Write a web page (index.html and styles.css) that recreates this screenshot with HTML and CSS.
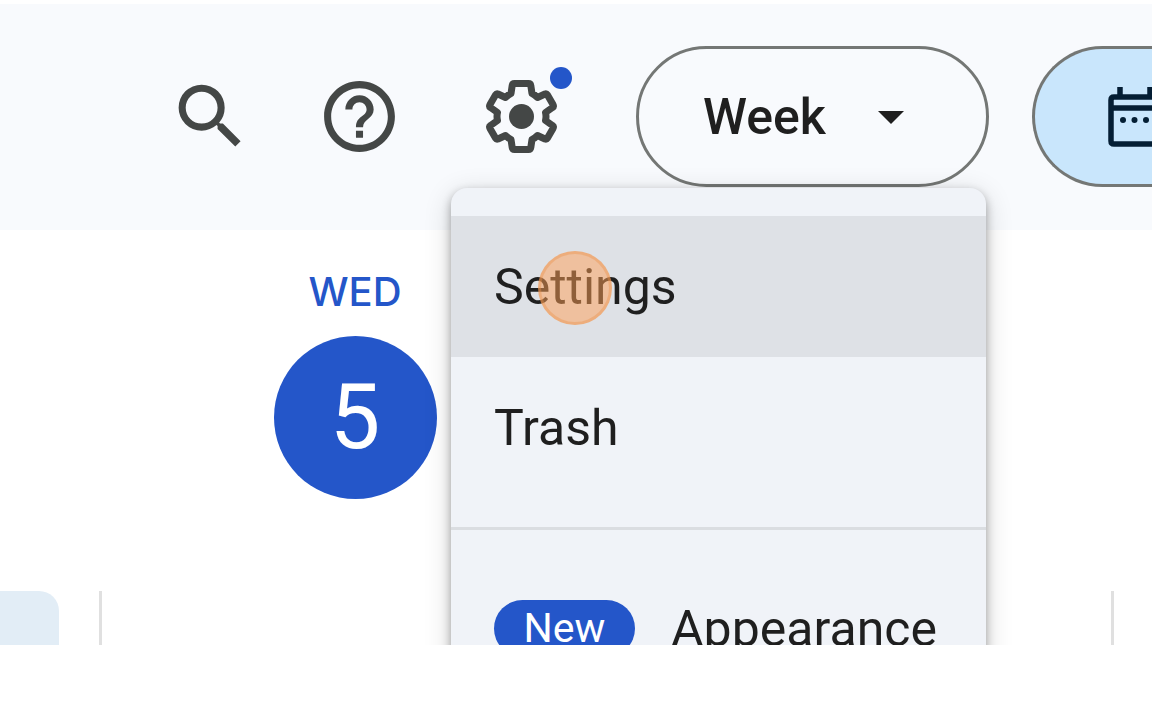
FILE: index.html
```html
<!DOCTYPE html>
<html lang="en">
<head>
<meta charset="utf-8">
<meta name="viewport" content="width=device-width, initial-scale=1">
<title>Calendar</title>
<link rel="stylesheet" href="styles.css">
</head>
<body>
<div class="app">
  <header class="toolbar">
    <button class="icon-button" type="button" aria-label="Search">
      <svg class="icon" viewBox="0 0 24 24"><path d="M15.5 14h-.79l-.28-.27A6.47 6.47 0 0 0 16 9.5 6.5 6.5 0 1 0 9.5 16c1.61 0 3.090-.59 4.230-1.570l.27.28v.79l5 4.990L20.490 19l-4.990-5zm-6 0C7.010 14 5 11.990 5 9.5S7.010 5 9.5 5 14 7.010 14 9.5 11.990 14 9.5 14z"/></svg>
    </button>
    <button class="icon-button" type="button" aria-label="Help">
      <svg class="icon" viewBox="0 0 24 24"><path d="M11 18h2v-2h-2v2zm1-16C6.480 2 2 6.480 2 12s4.480 10 10 10 10-4.480 10-10S17.520 2 12 2zm0 18c-4.410 0-8-3.590-8-8s3.590-8 8-8 8 3.590 8 8-3.590 8-8 8zm0-14c-2.210 0-4 1.790-4 4h2c0-1.100.9-2 2-2s2 .9 2 2c0 2-3 1.750-3 5h2c0-2.250 3-2.500 3-5 0-2.210-1.790-4-4-4z"/></svg>
    </button>
    <div class="settings">
      <button class="icon-button" type="button" aria-label="Settings menu" aria-expanded="true">
        <svg class="icon" viewBox="-42.5 -42.5 85 85">
          <path class="gear" d="M-7 -33H7Q9 -33 9.300 -31L10.500 -23Q13 -22 16 -19L23.500 -22.500Q25 -23 26 -21.500L31.500 -12Q32.500 -10 31 -9L24 -4Q25 0 24 4L31 9Q32.500 10 31.500 12L26 21.500Q25 23 23.500 22.500L16 19Q13 22 10.500 23L9.300 31Q9 33 7 33H-7Q-9 33 -9.300 31L-10.500 23Q-13 22 -16 19L-23.500 22.500Q-25 23 -26 21.500L-31.500 12Q-32.500 10 -31 9L-24 4Q-25 0 -24 -4L-31 -9Q-32.500 -10 -31.500 -12L-26 -21.500Q-25 -23 -23.500 -22.500L-16 -19Q-13 -22 -10.500 -23L-9.300 -31Q-9 -33 -7 -33Z"/>
          <circle r="12.500"/>
        </svg>
        <span class="notice-dot"></span>
      </button>
      <div class="menu" role="menu">
        <button class="menu-item menu-item-active" type="button" role="menuitem">Settings<span class="click-marker"></span></button>
        <button class="menu-item" type="button" role="menuitem">Trash</button>
        <hr class="separator">
        <button class="menu-item" type="button" role="menuitem"><span class="badge">New</span>Appearance</button>
      </div>
    </div>
    <div class="view-picker">
      <select class="view-select" aria-label="View">
        <option>Week</option>
      </select>
      <svg class="arrow" viewBox="0 0 26 13"><path d="M0 0H26L13 13Z"/></svg>
    </div>
    <button class="calendar-button" type="button" aria-label="Calendar">
      <svg class="calendar-icon" viewBox="0 0 64 60">
        <path class="calendar-line" d="M6 10H58Q61 10 61 13V54Q61 57 58 57H6Q3 57 3 54V13Q3 10 6 10ZM3 21H61M12 0V10M42 0V10"/>
        <circle cx="15" cy="33" r="3"/><circle cx="26.500" cy="33" r="3"/><circle cx="38" cy="33" r="3"/><circle cx="49.500" cy="33" r="3"/>
      </svg>
    </button>
  </header>
  <main class="week">
    <div class="column"><div class="day"></div><div class="slot"><div class="event"></div></div></div>
    <div class="column">
      <div class="day">
        <div class="day-name">WED</div>
        <button class="day-number" type="button">5</button>
      </div>
      <div class="slot"></div>
    </div>
    <div class="column"><div class="day"></div><div class="slot"></div></div>
  </main>
</div>
</body>
</html>
```

FILE: styles.css
```css
* {
  box-sizing: border-box;
}

body {
  margin: 0;
  padding: 4px 4px 0 0;
  background: #fff;
  color: #1f1f1f;
  font-family: Roboto, "Liberation Sans", sans-serif;
}

button,
select {
  margin: 0;
  padding: 0;
  border: 0;
  background: none;
  color: inherit;
  font: inherit;
}

.app {
  overflow: hidden;
}

.toolbar {
  display: flex;
  align-items: center;
  padding: 42px 0 43px 168px;
  background: #f8fafd;
}

.icon-button {
  position: relative;
  flex: none;
  width: 85px;
  height: 85px;
  margin-right: 64px;
}

.icon {
  display: block;
  width: 100%;
  height: 100%;
  fill: #444746;
}

.gear {
  fill: none;
  stroke: #444746;
  stroke-width: 7;
  stroke-linejoin: round;
}

.notice-dot {
  position: absolute;
  top: -7px;
  right: -8px;
  width: 22px;
  height: 22px;
  border-radius: 50%;
  background: #2456c9;
}

.settings {
  position: relative;
  flex: none;
  margin-left: 13px;
}

.settings .icon-button {
  display: block;
  margin-right: 72px;
}

.menu {
  position: absolute;
  z-index: 1;
  top: 114px;
  left: -28px;
  width: 535px;
  padding: 28px 0;
  border-radius: 16px;
  background: #f0f3f8;
  box-shadow: 0 4px 10px rgba(0, 0, 0, 0.32), 0 6px 28px rgba(0, 0, 0, 0.16);
}

.menu-item {
  position: relative;
  display: flex;
  align-items: center;
  width: 100%;
  height: 141px;
  padding: 0 43px;
  font-size: 50px;
  line-height: 60px;
}

.menu-item-active {
  background: #dee1e6;
}

.click-marker {
  position: absolute;
  top: 35px;
  left: 87px;
  width: 74px;
  height: 74px;
  border: 3px solid rgba(235, 145, 75, 0.4);
  border-radius: 50%;
  background: rgba(255, 160, 85, 0.5);
}

.separator {
  height: 3px;
  margin: 29px 0 28px;
  border: 0;
  background: #dadde1;
}

.badge {
  width: 141px;
  height: 57px;
  margin-right: 36px;
  border-radius: 29px;
  background: #2456c9;
  color: #fff;
  font-size: 41px;
  line-height: 57px;
  text-align: center;
}

.view-picker {
  position: relative;
  flex: none;
}

.view-select {
  display: block;
  width: 353px;
  height: 141px;
  padding: 0 64px;
  border: 3px solid #747775;
  border-radius: 71px;
  appearance: none;
  font-size: 50px;
  font-weight: 500;
}

.arrow {
  position: absolute;
  top: 65px;
  right: 85px;
  width: 26px;
  height: 13px;
  fill: #1f1f1f;
  pointer-events: none;
}

.calendar-button {
  flex: none;
  width: 177px;
  height: 141px;
  margin-left: 43px;
  padding-left: 73px;
  border: 3px solid #747775;
  border-right: 0;
  border-radius: 71px 0 0 71px;
  background: #c9e6fc;
}

.calendar-icon {
  display: block;
  width: 64px;
  height: 60px;
  fill: #041e34;
}

.calendar-line {
  fill: none;
  stroke: #041e34;
  stroke-width: 5.5;
}

.week {
  display: grid;
  grid-template-columns: 102px 1fr 1fr;
  padding-right: 38px;
}

.day {
  display: flex;
  flex-direction: column;
  align-items: center;
  gap: 22px;
  height: 361px;
  padding-top: 40px;
}

.day-name {
  color: #2456c9;
  font-family: Inter, "Liberation Sans", sans-serif;
  font-size: 40px;
  font-weight: 500;
  line-height: 44px;
}

.day-number {
  width: 163px;
  height: 163px;
  border-radius: 50%;
  background: #2456c9;
  color: #fff;
  font-size: 90px;
  line-height: 163px;
}

.slot {
  height: 54px;
  border-right: 3px solid #e0e0e0;
}

.event {
  width: 59px;
  height: 100%;
  border-top-right-radius: 20px;
  background: #e2edf6;
}
```
